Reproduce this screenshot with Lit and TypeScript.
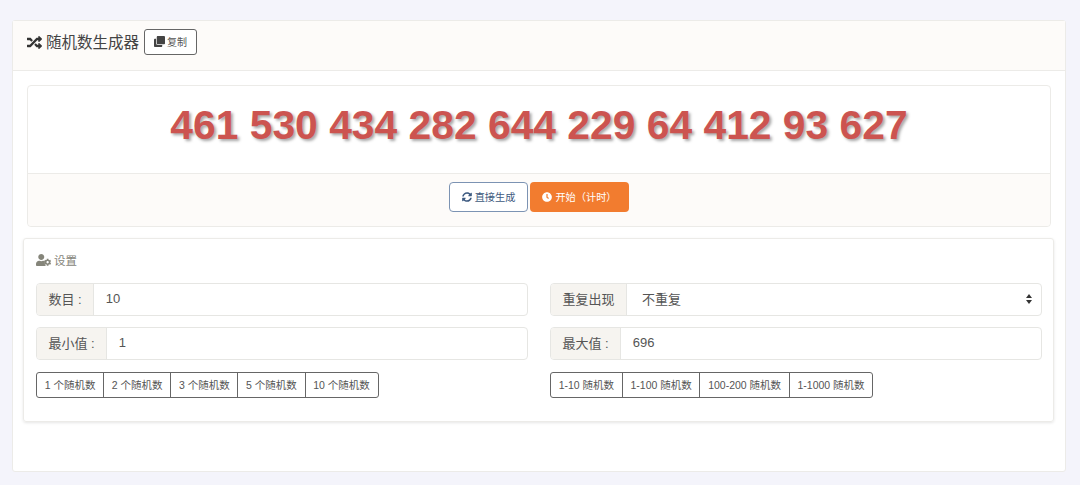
import { LitElement, html, css, svg } from "lit";
import { customElement } from "lit/decorators.js";

const P = {
  random: "M504.971 359.029c9.373 9.373 9.373 24.569 0 33.941l-80 79.984c-15.01 15.01-40.971 4.49-40.971-16.971V416h-58.785a12.004 12.004 0 0 1-8.773-3.812l-70.556-75.596 53.333-57.143L352 336h32v-39.981c0-21.438 25.943-31.998 40.971-16.971l80 79.981zM12 176h84l52.781 56.551 53.333-57.143-70.556-75.596A11.999 11.999 0 0 0 122.785 96H12c-6.627 0-12 5.373-12 12v56c0 6.627 5.373 12 12 12zm372 0v39.984c0 21.46 25.961 31.98 40.971 16.971l80-79.984c9.373-9.373 9.373-24.569 0-33.941l-80-79.981C409.943 24.021 384 34.582 384 56.019V96h-58.785a12.004 12.004 0 0 0-8.773 3.812L96 336H12c-6.627 0-12 5.373-12 12v56c0 6.627 5.373 12 12 12h110.785c3.326 0 6.503-1.381 8.773-3.812L352 176h32z",
  clone: "M464 0c26.51 0 48 21.49 48 48v288c0 26.51-21.49 48-48 48H176c-26.51 0-48-21.49-48-48V48c0-26.51 21.49-48 48-48h288M176 416c-44.112 0-80-35.888-80-80V128H48c-26.51 0-48 21.49-48 48v288c0 26.51 21.49 48 48 48h288c26.51 0 48-21.49 48-48v-48H176z",
  sync: "M370.72 133.28C339.458 104.008 298.888 87.962 255.848 88c-77.458.068-144.328 53.178-162.791 126.85-1.344 5.363-6.122 9.15-11.651 9.15H24.103c-7.498 0-13.194-6.807-11.807-14.176C33.933 94.924 134.813 8 256 8c66.448 0 126.791 26.136 171.315 68.685L463.03 40.97C478.149 25.851 504 36.559 504 57.941V192c0 13.255-10.745 24-24 24H345.941c-21.382 0-32.09-25.851-16.971-40.971l41.75-41.749zM32 296h134.059c21.382 0 32.09 25.851 16.971 40.971l-41.75 41.75c31.262 29.273 71.835 45.319 114.876 45.28 77.418-.07 144.315-53.144 162.787-126.849 1.344-5.363 6.122-9.15 11.651-9.15h57.304c7.498 0 13.194 6.807 11.807 14.176C478.067 417.076 377.187 504 256 504c-66.448 0-126.791-26.136-171.315-68.685L48.97 471.03C33.851 486.149 8 475.441 8 454.059V320c0-13.255 10.745-24 24-24z",
  clock: "M256,8C119,8,8,119,8,256S119,504,256,504,504,393,504,256,393,8,256,8Zm92.49,313h0l-20,25a16,16,0,0,1-22.49,2.5h0l-67-49.72a40,40,0,0,1-15-31.23V112a16,16,0,0,1,16-16h32a16,16,0,0,1,16,16V256l58,42.5A16,16,0,0,1,348.49,321Z",
  gear: "M610.5 373.3c2.6-14.1 2.6-28.5 0-42.6l25.8-14.9c3-1.7 4.3-5.2 3.3-8.5-6.7-21.6-18.2-41.2-33.2-57.4-2.3-2.5-6-3.1-9-1.4l-25.8 14.9c-10.9-9.3-23.4-16.5-36.9-21.3v-29.8c0-3.4-2.4-6.4-5.7-7.1-22.3-5-45-4.8-66.2 0-3.3.7-5.7 3.7-5.7 7.1v29.8c-13.5 4.8-26 12-36.9 21.3l-25.8-14.9c-2.9-1.7-6.7-1.1-9 1.4-15 16.2-26.5 35.8-33.2 57.4-1 3.3.4 6.8 3.3 8.5l25.8 14.9c-2.6 14.1-2.6 28.5 0 42.6l-25.8 14.9c-3 1.7-4.3 5.2-3.3 8.5 6.7 21.6 18.2 41.1 33.2 57.4 2.3 2.5 6 3.1 9 1.4l25.8-14.9c10.9 9.3 23.4 16.5 36.9 21.3v29.8c0 3.4 2.4 6.4 5.7 7.1 22.3 5 45 4.8 66.2 0 3.3-.7 5.7-3.7 5.7-7.1v-29.8c13.5-4.8 26-12 36.9-21.3l25.8 14.9c2.9 1.7 6.7 1.1 9-1.4 15-16.2 26.5-35.8 33.2-57.4 1-3.3-.4-6.8-3.3-8.5l-25.8-14.9zM496 400.5c-26.8 0-48.5-21.8-48.5-48.5s21.8-48.5 48.5-48.5 48.5 21.8 48.5 48.5-21.7 48.5-48.5 48.5z",
  user: "M224 256c70.7 0 128-57.3 128-128S294.7 0 224 0 96 57.3 96 128s57.3 128 128 128zM48 512h352c9 0 18-3 25-8-25-16-50-50-50-100 0-35 12-70 8-90-25-16-50-26-70-26h-17c-22 10-47 16-72 16s-50-6-72-16h-17C60 288 0 348 0 422v42c0 26.500 21.500 48 48 48z",
};

const icon = (d: string | string[], cls: string, vb = "0 0 512 512") =>
  html`<svg class=${cls} viewBox=${vb} aria-hidden="true">${(Array.isArray(d) ? d : [d]).map((p) => svg`<path fill="currentColor" d=${p}></path>`)}</svg>`;

@customElement("app-root")
export class AppRoot extends LitElement {
  static styles = css`
    :host {
      display: block;
      min-height: 485px;
      box-sizing: border-box;
      padding: 20px 14px 13px 12px;
      background: #f4f4fb;
      font-family: "Liberation Sans", "Noto Sans CJK SC", sans-serif;
      color: #555;
    }
    * { box-sizing: border-box; }
    .outer {
      height: 452px;
      background: #fff;
      border: 1px solid #ecebe8;
      border-radius: 3px;
    }
    .head {
      height: 50px;
      display: flex;
      align-items: flex-start;
      padding: 8px 14px 0;
      background: #fdfbf9;
      border-bottom: 1px solid #ecebe8;
      color: #444;
    }
    .ic-random { width: 15px; height: 15px; color: #333; margin: 6px 4px 0 0; }
    .title { font-size: 15.5px; line-height: 28px; }
    .copy {
      display: flex;
      align-items: center;
      justify-content: center;
      gap: 2px;
      width: 53px;
      height: 26px;
      margin-left: 5px;
      padding-bottom: 1px;
      border: 1px solid #666;
      border-radius: 3px;
      font-size: 10px;
      color: #555;
      background: #fff;
    }
    .ic-clone { width: 11px; height: 11px; color: #444; }
    .body { padding: 14px 11px 0 10px; }
    .result {
      margin: 0 3px 0 4px;
      height: 142px;
      border: 1px solid #ecebe8;
      border-radius: 4px;
      display: flex;
      flex-direction: column;
    }
    .nums {
      height: 87px;
      display: flex;
      align-items: center;
      justify-content: center;
      padding-bottom: 8px;
      font-size: 40.8px;
      font-weight: 700;
      color: #cc5450;
      text-shadow: 2px 2px 3px rgba(0, 0, 0, 0.35);
      white-space: nowrap;
    }
    .foot {
      flex: 1;
      display: flex;
      align-items: flex-start;
      justify-content: center;
      gap: 2px;
      padding-top: 8px;
      background: #fdfbf9;
      border-top: 1px solid #ecebe8;
      border-radius: 0 0 4px 4px;
    }
    .btn {
      display: flex;
      align-items: center;
      justify-content: center;
      gap: 3px;
      height: 30px;
      padding-bottom: 1px;
      font-size: 10.2px;
      border-radius: 4px;
    }
    .b1 { width: 79px; border: 1px solid #7c93b3; color: #3d5a80; background: #fff; }
    .b2 { width: 99px; background: #f27c2f; color: #fff; }
    .ic-sm { width: 10px; height: 10px; }
    .settings {
      margin-top: 11px;
      height: 184px;
      border: 1px solid #ecebe8;
      border-radius: 3px;
      box-shadow: 0 1px 3px rgba(0, 0, 0, 0.1);
      padding: 0 12px;
    }
    .s-title {
      height: 44px;
      display: flex;
      align-items: center;
      gap: 3px;
      font-size: 11.5px;
      color: #85857a;
      padding-bottom: 3px;
    }
    .ic-user { width: 15px; height: 12px; color: #85857a; }
    .grid {
      display: grid;
      grid-template-columns: 492px 492px;
      column-gap: 22px;
    }
    .group {
      display: flex;
      height: 32.5px;
      margin-bottom: 11.5px;
      border: 1px solid #e6e6e3;
      border-radius: 4px;
      font-size: 13px;
      overflow: hidden;
    }
    .addon {
      display: flex;
      align-items: center;
      padding: 0 11.5px 1px;
      background: #f6f4f0;
      border-right: 1px solid #e6e6e3;
      color: #555;
    }
    .val {
      flex: 1;
      display: flex;
      align-items: center;
      justify-content: space-between;
      padding: 0 11.5px 1px;
      color: #555;
    }
    .sel { padding: 0 9px 1px 15px; }
    .arrow { width: 6px; height: 10px; color: #333; }
    .btns { display: flex; margin-top: 0.5px; }
    .q {
      height: 26px;
      display: flex;
      align-items: center;
      padding: 0 7.7px;
      font-size: 10.5px;
      color: #555;
      border: 1px solid #666;
      margin-left: -1px;
      white-space: nowrap;
    }
    .q:first-child { margin-left: 0; border-radius: 3px 0 0 3px; }
    .q:last-child { border-radius: 0 3px 3px 0; }
  `;

  render() {
    const left = ["1 个随机数", "2 个随机数", "3 个随机数", "5 个随机数", "10 个随机数"];
    const right = ["1-10 随机数", "1-100 随机数", "100-200 随机数", "1-1000 随机数"];
    return html`
      <div class="outer">
        <div class="head">
          ${icon(P.random, "ic-random")}
          <span class="title">随机数生成器</span>
          <div class="copy">${icon(P.clone, "ic-clone")}<span>复制</span></div>
        </div>
        <div class="body">
          <div class="result">
            <div class="nums">461 530 434 282 644 229 64 412 93 627</div>
            <div class="foot">
              <div class="btn b1">${icon(P.sync, "ic-sm")}<span>直接生成</span></div>
              <div class="btn b2">${icon(P.clock, "ic-sm")}<span>开始（计时）</span></div>
            </div>
          </div>
          <div class="settings">
            <div class="s-title">${icon([P.user, P.gear], "ic-user", "0 0 640 512")}<span>设置</span></div>
            <div class="grid">
              <div class="group"><div class="addon">数目 :</div><div class="val">10</div></div>
              <div class="group">
                <div class="addon">重复出现</div>
                <div class="val sel">
                  <span>不重复</span>
                  <svg class="arrow" viewBox="0 0 6 10" aria-hidden="true"><path fill="currentColor" d="M3 0 6 4H0zM3 10 0 6h6z"></path></svg>
                </div>
              </div>
              <div class="group"><div class="addon">最小值 :</div><div class="val">1</div></div>
              <div class="group"><div class="addon">最大值 :</div><div class="val">696</div></div>
              <div class="btns">${left.map((t) => html`<div class="q">${t}</div>`)}</div>
              <div class="btns">${right.map((t) => html`<div class="q">${t}</div>`)}</div>
            </div>
          </div>
        </div>
      </div>
    `;
  }
}
